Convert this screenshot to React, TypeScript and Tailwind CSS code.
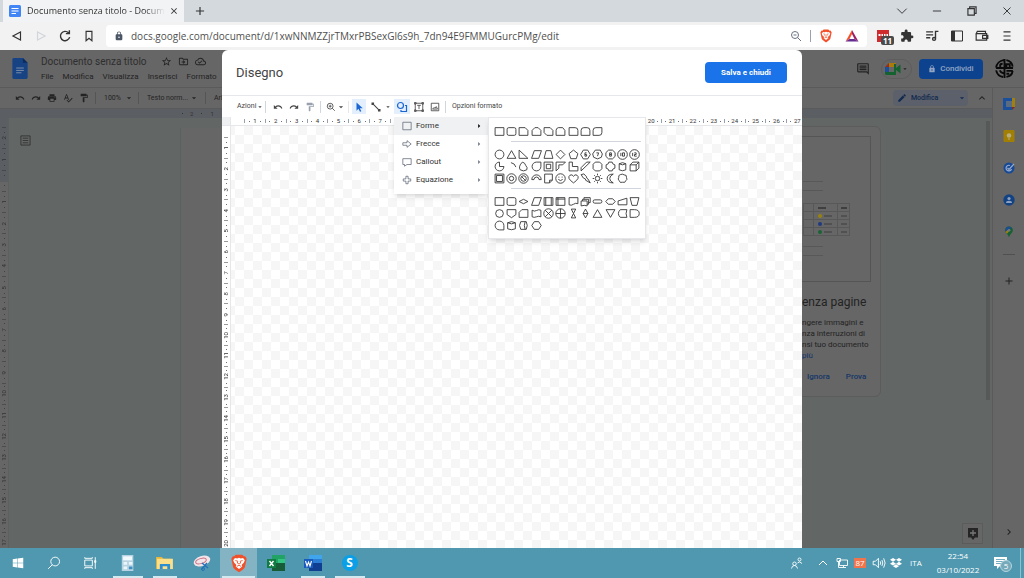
import type { ReactNode } from "react"
import {
  MdAdd,
  MdArrowDropDown,
  MdArrowRight,
  MdChevronRight,
  MdClose,
  MdEdit,
  MdExpandLess,
  MdExtension,
  MdFormatPaint,
  MdLock,
  MdOutlineCloudDone,
  MdOutlineComment,
  MdOutlineDriveFileMove,
  MdPrint,
  MdRedo,
  MdSpellcheck,
  MdStarBorder,
  MdUndo,
} from "react-icons/md"
import { FaDropbox, FaWindows } from "react-icons/fa"

// Outlines of the shape palette, each drawn in a 10x10 box
const SQUARE = "M1 1.5H9V8.5H1Z"
const CIRCLE = "M5 1A4 4 0 1 1 5 9A4 4 0 1 1 5 1Z"

const rectShapes = [
  SQUARE,
  "M2.5 1.5H7.5Q9 1.5 9 3V7Q9 8.5 7.5 8.5H2.5Q1 8.5 1 7V3Q1 1.5 2.5 1.5Z",
  "M1 1.5H6.5L9 4V8.5H1Z",
  "M3.5 1.5H6.5L9 4V8.5H1V4Z",
  "M1 1.5H6.5L9 4V8.5H3.5L1 6Z",
  "M3 1.5H7L9 4V8.5H1V4Q1 2 3 1.5Z",
  "M1 1.5H6.5Q9 1.5 9 4V8.5H1Z",
  "M3.5 1.5H6.5Q9 1.5 9 4V8.5H1V4Q1 1.5 3.5 1.5Z",
  "M3.5 1.5H9V6Q9 8.5 6.5 8.5H1V4Q1 1.5 3.5 1.5Z",
]

const basicShapes = [
  CIRCLE,
  "M5 1.5L9 8.5H1Z",
  "M1 1V8.5H9Z",
  "M3 1.5H9.5L7 8.5H.5Z",
  "M2.8 1.5H7.2L9 8.5H1Z",
  "M5 1L9 5L5 9L1 5Z",
  "M5 1L9 4.2L7.5 8.8H2.5L1 4.2Z",
  "M3 1H7L9.4 5L7 9H3L.6 5ZM6 3.5H4.5V6.5H6V5H4.5",
  "M3 1H7.5L9.4 4.5L8.5 7.5L5 9L1.5 7.5L.6 4.5ZM4 3.5H6L5 6.5",
  "M3.2 1H6.8L9.2 3.3V6.7L6.8 9H3.2L.8 6.7V3.3ZM4.2 3.5H5.8V6.5H4.2ZM4.2 5H5.8",
  "M5 .6A4.4 4.4 0 1 1 5 9.4A4.4 4.4 0 1 1 5 .6ZM3.5 3.5V6.5M5 3.5H6.8V6.5H5Z",
  "M5 .6A4.4 4.4 0 1 1 5 9.4A4.4 4.4 0 1 1 5 .6ZM3.3 3.5V6.5M4.8 3.5H6.5V5H5V6.5H7",
  "M5 1V5H9A4 4 0 1 1 5 1Z",
  "M4.5 1.5Q8 2 9 5.5",
  "M4 1A4 4 0 0 1 7 4Q9 6 8 8Q5 10 2 8Q0 5 4 1Z",
  "M5 1H9V5A4 4 0 1 1 5 1Z",
  "M1 1H9V9H1ZM3 3H7V7H3Z",
  "M1 1H9.5L7 3.5H3.5V6.5L1 9Z",
  "M1 1H4V5H9V9H1Z",
  "M1 9V6L6 1H9.3Z",
  "M3 1H7L9 3V7L7 9H3L1 7V3Z",
  "M3.5 1H6.5Q6.500 3 9 3.500V6.500Q6.500 7 6.500 9H3.500Q3.500 7 1 6.500V3.500Q3.500 3 3.500 1Z",
  "M2 2.5Q5 .5 8 2.5V8Q5 9.7 2 8ZM2 2.5Q5 4.5 8 2.5",
  "M1 3.5L3.5 1H9V6.5L6.5 9H1ZM1 3.5H6.5V9M6.5 3.5L9 1",
  "M1 1H9V9H1ZM2.3 2.3H7.7V7.7H2.3Z",
  "M5 .7A4.3 4.3 0 1 1 5 9.3A4.3 4.3 0 1 1 5 .7ZM5 3A2 2 0 1 1 5 7A2 2 0 1 1 5 3Z",
  "M5 .7A4.3 4.3 0 1 1 5 9.3A4.3 4.3 0 1 1 5 .7ZM5 2.5A2.5 2.5 0 1 1 5 7.5A2.5 2.5 0 1 1 5 2.5ZM3.200 3.200L6.800 6.800",
  "M.7 6A4.3 4.3 0 0 1 9.3 6H7.3A2.3 2.3 0 0 0 2.7 6Z",
  "M1.5 1H8.5V6.5L6 9H1.5ZM6 9V6.5H8.5",
  "M5 .7A4.3 4.3 0 1 1 5 9.3A4.3 4.3 0 1 1 5 .7ZM3 5.8Q5 8 7 5.8M3.5 3.3V4.2M6.5 3.3V4.2",
  "M5 9Q-1.5 4.5 1.8 2Q3.8 .8 5 3Q6.2 .8 8.2 2Q11.5 4.5 5 9Z",
  "M1 1.500L3.500 .8L6 3.500L6 4.500L7.300 5.500L9.3 9L5 6.5L5 5.500L3 4.500Z",
  "M5 3A2 2 0 1 1 5 7A2 2 0 1 1 5 3ZM5 .6V2M5 8V9.4M.6 5H2M8 5H9.4M2 2L3 3M7 7L8 8M8 2L7 3M2 8L3 7",
  "M7.500 1Q2 1 2 5Q2 9 7.500 9Q4.3 7.500 4.300 5Q4.300 2.500 7.500 1Z",
  "M3 1.5Q5 .5 6.5 1.7Q9 1.5 8.6 4Q9.8 6 8 7Q7.5 9.2 5.2 8.4Q2.5 9.4 2 7Q.3 5.5 1.6 4Q1 2 3 1.5Z",
]

const flowShapes = [
  SQUARE,
  "M2.5 1.5H7.5Q9 1.5 9 3V7Q9 8.5 7.5 8.5H2.5Q1 8.5 1 7V3Q1 1.5 2.5 1.5Z",
  "M5 3L9 5L5 7L1 5Z",
  "M3 1.5H9.5L7 8.5H.5Z",
  "M1 1.5H9V8.5H1ZM2.5 1.5V8.5M7.5 1.5V8.5",
  "M1 1.5H9V8.5H1ZM2.7 1.5V8.5M1 2.8H9",
  "M1 1.5H9V7Q7 6 5 7.5Q3 9 1 8Z",
  "M1 4.5H6.5V9Q4 8 1 9ZM2.3 4.5V3H7.8V7.5H6.5M3.6 3V1.5H9.3V6H7.8",
  "M2.5 3.5H7.5A1.5 1.5 0 0 1 7.5 6.5H2.5A1.5 1.5 0 0 1 2.5 3.5Z",
  "M3 2.5H7L9.3 5L7 7.5H3L.7 5Z",
  "M1 4.5L9 2V8H1Z",
  "M1 1.5H9L7.3 8.5H2.7Z",
  "M5 1.5A3.5 3.5 0 1 1 5 8.5A3.5 3.5 0 1 1 5 1.5Z",
  "M1 1.5H9V6L5 8.8L1 6Z",
  "M3.5 1.5H9V8.5H1V4Z",
  "M1 2Q3 3.5 5 2.3Q7 1 9 2V8Q7 7 5 8Q3 9 1 8Z",
  "M5 .7A4.3 4.3 0 1 1 5 9.3A4.3 4.3 0 1 1 5 .7ZM2 2L8 8M8 2L2 8",
  "M5 .7A4.3 4.3 0 1 1 5 9.3A4.3 4.3 0 1 1 5 .7ZM5 .7V9.3M.7 5H9.3",
  "M3 1H7L5 5L7 9H3L5 5Z",
  "M5 1L7.2 5L5 9L2.8 5ZM2.8 5H7.2",
  "M5 1.5L9 8.5H1Z",
  "M1 1.5H9L5 8.5Z",
  "M3 1.5H9Q7.5 5 9 8.5H3Q-.5 5 3 1.5Z",
  "M1 1.5H5Q9.3 1.5 9.3 5Q9.3 8.5 5 8.5H1Z",
  "M9 9H5A4 4 0 1 1 9 5Z",
  "M1.5 2.5Q5 .5 8.5 2.5V8Q5 9.7 1.5 8ZM1.5 2.5Q5 4.5 8.5 2.5",
  "M2.5 1.5H7.5Q9.3 5 7.5 8.5H2.5Q.3 5 2.5 1.5ZM6.5 1.5Q5 5 6.5 8.5",
  "M3 1.5H7L9.3 5L7 8.5H3L.7 5Z",
]

const menuItems = [
  { label: "Forme", d: "M1 1.5H11V10.5H1Z" },
  { label: "Frecce", d: "M1 4.5H6V2L11 6L6 10V7.5H1Z" },
  { label: "Callout", d: "M1 2H11V9H6L3 11V9H1Z" },
  { label: "Equazione", d: "M4.7 1.5H7.3V4.7H10.5V7.3H7.3V10.5H4.7V7.3H1.5V4.7H4.7Z" },
]

const docMenus = ["File", "Modifica", "Visualizza", "Inserisci", "Formato"]
const topNumbers = Array.from({ length: 27 }, (_, i) => String(i + 1))
const sideNumbers = Array.from({ length: 20 }, (_, i) => String(i + 1))
const pageNumbers = ["2", "1", "", ...Array.from({ length: 17 }, (_, i) => String(i + 1))]

function Line({ d, className = "size-3", box = 24, width = 2 }: { d: string; className?: string; box?: number; width?: number }) {
  return (
    <svg viewBox={`0 0 ${box} ${box}`} className={className} fill="none" stroke="currentColor" strokeWidth={width}>
      <path d={d} />
    </svg>
  )
}

function HorizontalRuler({ marks }: { marks: string[] }) {
  return (
    <>
      {marks.map((n) => (
        <div key={n} className="flex min-w-0 flex-1 basis-0 items-center justify-between">
          <i className="h-1 w-px bg-gray-400" />
          <i className="size-px bg-gray-500" />
          <span className="leading-none">{n}</span>
          <i className="size-px bg-gray-500" />
          <i />
        </div>
      ))}
    </>
  )
}

function VerticalRuler({ marks }: { marks: string[] }) {
  return (
    <>
      {marks.map((n, i) => (
        <div key={i} className="flex min-h-0 flex-1 basis-0 flex-col items-center justify-between">
          <i className="h-px w-1 bg-current opacity-50" />
          <i className="size-px bg-current opacity-70" />
          <span className="rotate-180 leading-none [writing-mode:vertical-rl]">{n}</span>
          <i className="size-px bg-current opacity-70" />
          <i />
        </div>
      ))}
    </>
  )
}

function BraveLogo({ className }: { className: string }) {
  return (
    <svg viewBox="0 0 24 26" className={className}>
      <path d="M7.500 1H16.500L18.500 3.200L20.500 3L22.500 6.500L22 9L20 18Q19 20.500 12 25Q5 20.500 4 18L2 9L1.500 6.500L3.500 3L5.500 3.200Z" fill="#f2502a" />
      <path d="M6.500 5.500L9.500 6L12 5L14.500 6L17.500 5.500L20 8.500L18.500 12L15.500 15L16.500 17L12 20.500L7.500 17L8.500 15L5.500 12L4 8.500Z" fill="#fff" />
      <path d="M7 9L10.300 9.800L9.800 12.500L12 13.700L14.200 12.500L13.700 9.800L17 9M9 17L12 15.300L15 17" fill="none" stroke="#f2502a" strokeWidth="1.2" />
    </svg>
  )
}

function BrowserBar() {
  return (
    <header className="shrink-0 bg-[#d4d9dd] text-[#333]">
      <div className="flex h-[22px] items-stretch">
        <div className="ml-[3px] flex w-[181px] items-center bg-[#f2f3f4] pl-1.5">
          <svg viewBox="0 0 12 12" className="size-3 shrink-0">
            <rect width="12" height="12" rx="1.5" fill="#4285f4" />
            <path d="M2.5 3.5H9.5M2.5 6H9.5M2.5 8.5H7" stroke="#fff" strokeWidth="1.2" />
          </svg>
          <span className="ml-1.5 font-['Open_Sans',sans-serif] text-[9px] whitespace-nowrap [mask-image:linear-gradient(to_right,#000_85%,transparent)]">
            Documento senza titolo - Docum
          </span>
          <button aria-label="Chiudi scheda" className="mr-[5px] ml-auto"><MdClose className="size-2.5" /></button>
        </div>
        <button aria-label="Nuova scheda" className="ml-[9px]"><MdAdd className="size-3.5" /></button>
        <div className="ml-auto flex items-center gap-[21px] pr-2.5">
          <button aria-label="Cerca schede"><Line d="M4 8L12 16L20 8" className="size-3.5" width={1.6} /></button>
          <button aria-label="Riduci"><Line d="M5 12H19" className="size-3.5" width={1.6} /></button>
          <button aria-label="Ripristina"><Line d="M5 8H16V19H5ZM8 8V5H19V16H16" className="size-3.5" /></button>
          <button aria-label="Chiudi"><Line d="M6 6L18 18M18 6L6 18" className="size-3.5" width={1.6} /></button>
        </div>
      </div>
      <div className="flex h-7 items-center bg-[#f2f2f2] pr-[10px] pl-[10px]">
        <div className="flex items-center gap-[10px]">
          <button aria-label="Indietro"><Line d="M18 5V19L5 12Z" className="size-3.5" /></button>
          <button aria-label="Avanti" className="text-gray-300"><Line d="M6 5V19L19 12Z" className="size-3.5" /></button>
          <button aria-label="Ricarica"><Line d="M18 6.500A8 8 0 1 0 20 14M19.500 2V8H13.500" className="size-3.5" width={2.4} /></button>
          <button aria-label="Segnalibro"><Line d="M7 4H17V20L12 16L7 20Z" className="size-3.5" /></button>
        </div>
        <div className="ml-2.5 flex h-[22px] flex-1 items-center rounded-sm bg-white pr-2 pl-2">
          <MdLock className="size-2.5 text-gray-600" />
          <input
            aria-label="Indirizzo"
            className="ml-[7px] min-w-0 flex-1 bg-transparent font-['Open_Sans',sans-serif] text-[10px] text-[#505050] outline-none"
            defaultValue="docs.google.com/document/d/1xwNNMZZjrTMxrPBSexGl6s9h_7dn94E9FMMUGurcPMg/edit"
          />
          <Line d="M10 3A7 7 0 1 1 10 17A7 7 0 1 1 10 3ZM15 15L22 22M7 10H13" className="size-3 text-gray-500" />
          <i className="mx-2 h-3 w-px bg-gray-400" />
          <BraveLogo className="size-3.5" />
          <svg viewBox="0 0 14 14" className="ml-3 size-3.5">
            <path d="M7 1L.5 12.5L4.5 10L7 5Z" fill="#f2552c" />
            <path d="M7 1L13.5 12.5L9.5 10L7 5Z" fill="#9e1f63" />
            <path d="M.5 12.5H13.5L9.5 10H4.5Z" fill="#662d91" />
          </svg>
        </div>
        <div className="ml-2.5 flex items-center gap-[11px]">
          <button aria-label="Estensione" className="relative h-3 w-3 bg-[#cf2b2f]">
            <svg viewBox="0 0 12 12" className="absolute inset-0"><path d="M1.500 4H3.500V6H1.500ZM4.500 4H6V6H4.500ZM7 4H8.500V6H7ZM9.500 4H11V6H9.500Z" fill="#fff" /></svg>
            <span className="absolute top-1.5 left-1 rounded-[2px] bg-[#4a4a4a] px-0.5 font-['Open_Sans',sans-serif] text-[8px] leading-[9px] font-bold text-white">11</span>
          </button>
          <button aria-label="Estensioni"><MdExtension className="size-3.5" /></button>
          <button aria-label="Media"><Line d="M2 5H14M2 10H14M2 15H9M18 18V4H23M18 17A2.5 2.5 0 1 1 13 17A2.5 2.5 0 1 1 18 17" className="size-3.5" width={2.4} /></button>
          <button aria-label="Barra laterale">
            <svg viewBox="0 0 14 14" className="size-3.5"><path d="M1.5 2H12.5V12H1.5Z" fill="none" stroke="currentColor" /><path d="M1.5 2H5V12H1.5Z" fill="currentColor" /></svg>
          </button>
          <button aria-label="Portafoglio"><Line d="M2 8V19H20V8H2L4 4H18V8M13 11H22V16H13Z" className="size-3.5" /></button>
          <button aria-label="Menu"><Line d="M6 5H18M6 12H18M6 19H18" className="size-3.5" /></button>
        </div>
      </div>
    </header>
  )
}

function DocsHeader() {
  return (
    <div className="flex h-[37px] shrink-0 items-center pr-[10px] pl-3">
      <svg viewBox="0 0 16 22" className="h-[21px] w-4">
        <path d="M1.5 0H11L16 5V20.5Q16 22 14.5 22H1.5Q0 22 0 20.5V1.5Q0 0 1.5 0Z" fill="#174384" />
        <path d="M11 0L16 5H11Z" fill="#0c2d5c" />
        <path d="M4 10.5H12M4 13H12M4 15.500H9.500" stroke="#8190a8" />
      </svg>
      <div className="ml-[13px]">
        <div className="flex items-center">
          <h1 className="text-[10px] leading-4 whitespace-nowrap text-[#2e2e2e]">Documento senza titolo</h1>
          <div className="ml-3.5 flex gap-1.5">
            <MdStarBorder className="size-[11px]" />
            <MdOutlineDriveFileMove className="size-[11px]" />
            <MdOutlineCloudDone className="size-[11px]" />
          </div>
        </div>
        <nav className="flex gap-[9px] text-[8px] leading-[14px]">
          {docMenus.map((m) => (
            <button key={m}>{m}</button>
          ))}
        </nav>
      </div>
      <div className="ml-auto flex items-center">
        <MdOutlineComment className="size-3.5" />
        <button aria-label="Meet" className="ml-[11px] flex h-5 w-[31px] items-center justify-center rounded-full border border-[#5d5d5d]">
          <svg viewBox="0 0 16 12" className="h-3 w-4">
            <path d="M0 4L4 0V4Z" fill="#992c22" />
            <path d="M4 0H11V4H4Z" fill="#a87b0c" />
            <path d="M0 4H4V9H0Z" fill="#1b4f9a" />
            <path d="M0 9H11V12H1.500Q0 12 0 10.500Z" fill="#14622f" />
            <path d="M11 1V11H9V1ZM11 5L15.500 1.500V10.500L11 7Z" fill="#14622f" />
          </svg>
          <MdArrowDropDown className="size-2" />
        </button>
        <button className="ml-[7px] flex h-5 w-16 items-center justify-center gap-1 rounded-sm bg-[#0d438e] text-[8px] font-medium text-[#93a5c3]">
          <MdLock className="size-2" />
          Condividi
        </button>
        <svg viewBox="0 0 20 20" className="ml-3 size-[19px]" fill="none" stroke="#0a0a0a" strokeWidth="2">
          <path d="M10 0V20M1 9.500H19M9 1.200A9 9 0 0 0 1.200 9M5.500 9V6.500Q5.500 5 8 5M12 1.200Q18 2.500 18.500 8M12 9V5.500H15.500V9M1.200 12Q2.500 18 8.500 19M5 12Q6 14.500 9 15M12 12.500H18.800M18.500 12.500Q18 18 12 18.800M12 15.500H15" />
        </svg>
      </div>
    </div>
  )
}

function DocsToolbar() {
  return (
    <div className="flex h-[22px] shrink-0 items-center border-t border-b border-[#5a5a5a] pr-1 pl-[15px] text-[7px]">
      <div className="flex gap-1.5">
        <button aria-label="Annulla"><MdUndo className="size-2.5" /></button>
        <button aria-label="Ripeti"><MdRedo className="size-2.5" /></button>
        <button aria-label="Stampa"><MdPrint className="size-2.5" /></button>
        <button aria-label="Ortografia"><MdSpellcheck className="size-2.5" /></button>
        <button aria-label="Copia formato"><MdFormatPaint className="size-2.5" /></button>
      </div>
      <i className="ml-1.5 h-3 w-px bg-[#555]" />
      <select aria-label="Zoom" className="ml-2 w-[18px] appearance-none"><option>100%</option></select>
      <MdArrowDropDown className="ml-0.5 size-2.5" />
      <i className="ml-1 h-3 w-px bg-[#555]" />
      <select aria-label="Stile" className="ml-2 w-[42px] appearance-none"><option>Testo norm...</option></select>
      <MdArrowDropDown className="size-2.5" />
      <i className="ml-1.5 h-3 w-px bg-[#555]" />
      <span className="ml-2">Arial</span>
      <label className="ml-auto flex h-4 w-[75px] items-center rounded-sm bg-[#5b606a] pl-1 text-[#12294f]">
        <MdEdit className="size-2.5" />
        <select aria-label="Modalità" className="ml-1 w-[46px] appearance-none font-medium"><option>Modifica</option></select>
        <MdArrowDropDown className="size-2.5" />
      </label>
      <button aria-label="Nascondi menu" className="ml-2"><MdExpandLess className="size-3" /></button>
    </div>
  )
}

const tableRows = [
  { dot: "", bar: "bg-[#3f3f3f]" },
  { dot: "bg-[#98830f]", bar: "bg-[#515151]" },
  { dot: "bg-[#203a82]", bar: "bg-[#515151]" },
  { dot: "bg-[#1c6234]", bar: "bg-[#515151]" },
]

function PagelessCard() {
  return (
    <section className="mt-[8px] ml-auto h-[271px] w-[90px] rounded-md border border-[#5b5b5b] bg-[#666]">
      <div className="mt-[9px] mr-[9px] h-[146px] border border-l-0 border-[#555] pl-[11px]">
        <div className="mt-[44px] h-2.5 w-5 border-y border-[#585858]" />
        <table className="mt-3 w-[47px]">
          <tbody>
            {tableRows.map(({ dot, bar }) => (
              <tr key={dot} className="h-2">
                <td className="border border-[#585858]" />
                <td className="w-6 border border-[#585858]">
                  <div className="flex h-1 items-center gap-0.5 pl-1">
                    {dot && <i className={`size-1 rounded-full ${dot}`} />}
                    <i className={`h-0.5 w-2 ${bar}`} />
                  </div>
                </td>
                <td className="w-3 border border-[#585858]"><i className={`mx-auto block h-0.5 w-1.5 ${bar}`} /></td>
              </tr>
            ))}
          </tbody>
        </table>
        <div className="mt-2.5 h-2.5 w-5 border-y border-[#585858]" />
      </div>
      <div className="pl-2.5 whitespace-nowrap">
        <h2 className="mt-3 text-[12px] leading-4">enza pagine</h2>
        <p className="mt-[7px] text-[8px] leading-[11px]">
          ngere immagini e
          <br />
          nza interruzioni di
          <br />
          nsi tuo documento
          <br />
          <a href="#piu" className="text-[#153668]">più</a>
        </p>
        <div className="mt-2.5 flex gap-4 pl-[5px] text-[8px] font-medium text-[#153668]">
          <button>Ignora</button>
          <button>Prova</button>
        </div>
      </div>
    </section>
  )
}

function SidePanel() {
  return (
    <aside className="flex w-8 shrink-0 flex-col items-center border-t border-l border-[#5a5a5a] pt-2.5">
      <svg viewBox="0 0 12 12" className="size-3">
        <path d="M0 0H9V3H3V9H0Z" fill="#1b4f9c" /><path d="M9 0H12V9H9Z" fill="#a0800e" /><path d="M0 9H9V12H0Z" fill="#1b4f9c" /><path d="M9 9H12L9 12Z" fill="#7b2a24" /><path d="M3 3H9V9H3Z" fill="#5c6c80" />
      </svg>
      <svg viewBox="0 0 12 12" className="mt-5 size-3">
        <rect x=".5" width="11" height="12" rx="1" fill="#a07f04" /><circle cx="6" cy="5.500" r="2.300" fill="#b9ad80" /><path d="M5 9H7" stroke="#b9ad80" />
      </svg>
      <svg viewBox="0 0 12 12" className="mt-5 size-3">
        <circle cx="6" cy="6" r="5.500" fill="#174a95" /><path d="M8.500 7A2.800 2.800 0 1 1 7 3.500M4.500 6L6 7.500L11 2" fill="none" stroke="#9aabca" strokeWidth="1.200" />
      </svg>
      <svg viewBox="0 0 12 12" className="mt-5 size-3">
        <circle cx="6" cy="6" r="5.700" fill="#134283" /><circle cx="6" cy="4.500" r="1.600" fill="#8da0bd" /><path d="M3 9Q3 6.700 6 6.700Q9 6.700 9 9Z" fill="#8da0bd" />
      </svg>
      <svg viewBox="0 0 12 12" className="mt-5 size-3">
        <path d="M6 .5A3.800 3.800 0 0 1 9.800 4.300C9.800 7 6.800 8 6 11.500C5.200 8 2.200 7 2.200 4.300A3.800 3.800 0 0 1 6 .5Z" fill="#146132" /><path d="M2.200 4.500A3.800 3.800 0 0 1 6 .5L8.500 1.500L4 7Z" fill="#1c4d90" /><path d="M2.500 6L4 7.800L6 5.500L4.500 4Z" fill="#9f7f0c" /><circle cx="6" cy="4.300" r="1.400" fill="#777" />
      </svg>
      <i className="mt-4 h-px w-3 bg-[#505050]" />
      <button aria-label="Componenti aggiuntivi" className="mt-5"><MdAdd className="size-3" /></button>
      <button aria-label="Nascondi pannello" className="mt-auto mb-2.5"><MdChevronRight className="size-3" /></button>
    </aside>
  )
}

function DocsPage() {
  return (
    <div className="flex h-full flex-col bg-[#666] text-[#232323]">
      <DocsHeader />
      <div className="flex min-h-0 flex-1">
        <div className="flex min-w-0 flex-1 flex-col">
          <DocsToolbar />
          <div className="flex h-[9px] shrink-0 items-center bg-[#5b5e63] pl-[182px] text-[6px] text-[#333]">
            <i className="size-px bg-current" />
            <span className="ml-[7px]">2</span>
            <i className="ml-2 size-px bg-current" />
            <span className="ml-2">1</span>
          </div>
          <div className="flex min-h-0 flex-1 bg-[#626664]">
            <div className="flex w-2 flex-col overflow-hidden bg-[linear-gradient(#5b5e63_64px,#666_64px)] text-[6px] text-[#333]">
              <div className="mt-[9px] -mb-[5px] flex min-h-0 flex-1 flex-col">
                <VerticalRuler marks={pageNumbers} />
              </div>
            </div>
            <div className="w-[172px] border-l border-[#5c605f] pt-[17px] pl-[11px] text-[#333]">
              <Line d="M1 1H11V11H1ZM3 3.500H9M3 6H9M3 8.500H9" box={12} width={1} className="size-[11px]" />
            </div>
            <div className="mt-[10px] flex-1 border-l border-[#596363] bg-[#666]" />
            <div className="flex w-[212px] flex-col">
              <PagelessCard />
              <button aria-label="Esplora" className="mt-auto mr-[-102px] mb-1 ml-auto flex size-[21px] items-center justify-center border border-[#5b5b5b] bg-[#666]">
                <svg viewBox="0 0 12 12" className="size-3"><path d="M1 0H11V9.500H8L6 12L4 9.500H1Z" fill="#252525" /><path d="M6 2V8M3 5H9" stroke="#777" strokeWidth="1.300" /></svg>
              </button>
            </div>
            <div className="flex w-[111px] justify-end pt-[3px] pr-0.5">
              <div className="h-[279px] w-1 bg-[#565958]" />
            </div>
          </div>
        </div>
        <SidePanel />
      </div>
    </div>
  )
}

function ShapeGrid({ shapes }: { shapes: string[] }) {
  return (
    <div className="grid grid-cols-12 px-1">
      {shapes.map((d, i) => (
        <button key={i} aria-label="Forma" className="flex h-[12px] items-center justify-center">
          <Line d={d} box={10} width={0.8} className="size-[11px]" />
        </button>
      ))}
    </div>
  )
}

function ShapeMenu() {
  return (
    <div className="absolute top-full left-0 z-10 w-[94px] bg-white text-[#333] shadow-md">
      {menuItems.map((item, i) => (
        <button key={item.label} className={`flex h-[18px] w-full items-center pl-2 text-[8px] ${i === 0 ? "bg-[#eff1f3]" : ""}`}>
          <Line d={item.d} box={12} width={0.8} className="size-2.5 text-gray-600" />
          <span className="ml-1">{item.label}</span>
          <MdArrowRight className={`mr-1 ml-auto size-2.5 ${i === 0 ? "text-black" : "text-gray-500"}`} />
        </button>
      ))}
      <div className="h-[5px]" />
      <div className="absolute top-0 left-full w-[158px] border border-gray-200 bg-white py-[7px] text-[#333] shadow-md">
        <ShapeGrid shapes={rectShapes} />
        <hr className="mt-1 mr-1 mb-1.5 ml-[22px] border-gray-300" />
        <ShapeGrid shapes={basicShapes} />
        <hr className="mt-1 mr-1 mb-1.5 ml-[22px] border-gray-300" />
        <ShapeGrid shapes={flowShapes} />
      </div>
    </div>
  )
}

function ToolButton({ label, className = "w-4", children }: { label: string; className?: string; children: ReactNode }) {
  return (
    <button aria-label={label} className={`flex h-[15px] items-center justify-center ${className}`}>
      {children}
    </button>
  )
}

function DrawingDialog() {
  return (
    <div role="dialog" aria-label="Disegno" className="flex h-full w-[580px] flex-col rounded-t-md bg-white text-[#444]">
      <div className="flex h-[45px] shrink-0 items-center justify-between pr-[15px] pl-3.5">
        <h2 className="text-[13px]">Disegno</h2>
        <button className="h-[21px] w-[82px] rounded-sm bg-[#1a73e8] text-[8px] font-bold text-white">Salva e chiudi</button>
      </div>
      <div className="flex h-[22px] shrink-0 items-center border-t border-gray-200 pl-[15px] text-[7px]">
        <button className="flex w-6 items-center">Azioni<MdArrowDropDown className="size-2 shrink-0" /></button>
        <i className="mx-1 h-3 w-px bg-gray-300" />
        <ToolButton label="Annulla"><MdUndo className="size-2.5" /></ToolButton>
        <ToolButton label="Ripeti"><MdRedo className="size-2.5" /></ToolButton>
        <ToolButton label="Copia formato" className="w-4 text-gray-400"><MdFormatPaint className="size-2.5" /></ToolButton>
        <i className="mx-0.5 h-3 w-px bg-gray-300" />
        <ToolButton label="Zoom" className="ml-px w-6">
          <Line d="M10 3A7 7 0 1 1 10 17A7 7 0 1 1 10 3ZM15 15L21 21M6.500 10H13.500M10 6.500V13.500" className="size-2.5" />
          <MdArrowDropDown className="size-2.5" />
        </ToolButton>
        <i className="mr-[3px] h-3 w-px bg-gray-200" />
        <ToolButton label="Seleziona" className="w-3.5 bg-[#e4effd]">
          <svg viewBox="0 0 12 12" className="size-2.5"><path d="M3 .5L10.500 7.500H7L8.800 11L7.200 11.800L5.400 8.200L3 10.500Z" fill="#1a66d2" /></svg>
        </ToolButton>
        <ToolButton label="Linea" className="ml-0.5 w-4"><Line d="M4 4L20 20M2.500 2.500H6V6H2.500ZM18 18H21.500V21.500H18Z" className="size-2.5" width={2.6} /></ToolButton>
        <ToolButton label="Tipo di linea" className="mr-0.5 w-2"><MdArrowDropDown className="size-2.5" /></ToolButton>
        <div className="relative flex h-full items-center">
          <ToolButton label="Forma" className="w-4 bg-[#e4effd] text-[#1a66d2]"><Line d="M9 3A6 6 0 1 1 9 15A6 6 0 1 1 9 3ZM18 9H21V21H10V18" className="size-3" width={2.4} /></ToolButton>
          <ShapeMenu />
        </div>
        <ToolButton label="Casella di testo" className="ml-px w-4"><Line d="M3 3H21V21H3ZM7.500 8H16.500M12 8V17M1 1H5V5H1ZM19 1H23V5H19ZM1 19H5V23H1ZM19 19H23V23H19Z" className="size-2.5" /></ToolButton>
        <ToolButton label="Immagine"><Line d="M3 3H21V21H3ZM6 17L10 13L12 15L15 11L18 17Z" className="size-2.5" /></ToolButton>
        <i className="mr-1.5 ml-0.5 h-3 w-px bg-gray-300" />
        <button>Opzioni formato</button>
      </div>
      <div className="flex h-[9px] shrink-0 overflow-hidden border-b border-gray-200 text-[6px] text-[#333]">
        <i className="w-[9px] border-r border-gray-200 bg-[#eef0f2]" />
        <div className="-mr-[5px] ml-[13px] flex min-w-0 flex-1">
          <HorizontalRuler marks={topNumbers} />
        </div>
      </div>
      <div className="flex min-h-0 flex-1 overflow-hidden">
        <div className="flex w-[9px] flex-col border-r border-gray-200 text-[6px] text-[#333]">
          <div className="mt-[11px] -mb-[5px] flex min-h-0 flex-1 flex-col">
            <VerticalRuler marks={sideNumbers} />
          </div>
        </div>
        <div className="flex-1 bg-[conic-gradient(#f6f6f6_25%,#fff_0_50%,#f6f6f6_0_75%,#fff_0)] bg-[length:18px_18px] bg-[position:4px_0px]" />
      </div>
    </div>
  )
}

function TaskButton({ label, className = "", bar = "", children }: { label: string; className?: string; bar?: string; children: ReactNode }) {
  return (
    <button aria-label={label} className={`relative flex h-full w-[37px] items-center justify-center ${className}`}>
      {children}
      {bar && <i className={`absolute bottom-0 h-0.5 bg-[#d3e9f0] ${bar}`} />}
    </button>
  )
}

function Taskbar() {
  return (
    <footer className="flex h-[30px] shrink-0 items-stretch bg-[#4f98af] font-['Open_Sans',sans-serif] text-white">
      <button aria-label="Start" className="flex w-9 items-center justify-center"><FaWindows className="size-3" /></button>
      <button aria-label="Cerca" className="flex w-9 items-center justify-center"><Line d="M14 2A7.500 7.500 0 1 1 14 17A7.500 7.500 0 1 1 14 2ZM9 15L2 22" className="size-3.5" width={1.6} /></button>
      <button aria-label="Visualizzazione attività" className="mr-px flex w-9 items-center justify-center">
        <Line d="M3 7H16V17H3ZM3 2V4H16V2M3 22V20H16V22M21 2V22M20 8H22V11H20Z" className="size-3.5" width={1.6} />
      </button>
      <TaskButton label="Calcolatrice" bar="w-[30px]">
        <svg viewBox="0 0 14 18" className="h-4 w-3.5"><path d="M0 0H13V18H0Z" fill="#b8d3e1" /><path d="M1.500 1.500H11.500V6H1.500Z" fill="#f3fafd" /><path d="M2 8H6V11H2ZM8 8H12V11H8ZM2 13H6V16H2Z" fill="#e9f6fb" /><path d="M8 13H12V16H8Z" fill="#3f8fc4" /></svg>
      </TaskButton>
      <TaskButton label="Esplora file" bar="w-6">
        <svg viewBox="0 0 18 15" className="h-3.5 w-[17px]"><path d="M0 1H6L8 3H17V14H0Z" fill="#e8b93c" /><path d="M1 3H18V14H1Z" fill="#fbe08b" /><path d="M4 14V8.500H15V14H12V11H7V14Z" fill="#2e8fd0" /></svg>
      </TaskButton>
      <TaskButton label="Strumento di cattura">
        <svg viewBox="0 0 18 16" className="h-4 w-[18px]"><ellipse cx="9" cy="6" rx="8.500" ry="5" fill="#f2e4e9" transform="rotate(-18 9 6)" /><ellipse cx="8" cy="6" rx="5.500" ry="2.500" fill="none" stroke="#c9717f" transform="rotate(-18 8 6)" /><path d="M9 8L15 13M14 8L9 14" stroke="#2672b8" strokeWidth="1.500" /><circle cx="10" cy="14" r="1.500" fill="none" stroke="#2672b8" /></svg>
      </TaskButton>
      <TaskButton label="Brave" className="bg-[#84b3c4]" bar="w-[33px]"><BraveLogo className="h-[19px] w-[18px]" /></TaskButton>
      <TaskButton label="Excel">
        <svg viewBox="0 0 18 16" className="h-4 w-[18px]"><path d="M5 0H18V16H5Z" fill="#21a366" /><path d="M5 8H18V16H5Z" fill="#185c37" /><path d="M11 4H18V8H11Z" fill="#33c481" /><path d="M0 4H9V13H0Z" fill="#107c41" /><path d="M2.500 6L6.500 11M6.500 6L2.500 11" stroke="#fff" strokeWidth="1.400" /></svg>
      </TaskButton>
      <TaskButton label="Word" bar="w-6">
        <svg viewBox="0 0 18 16" className="h-4 w-[18px]"><path d="M5 0H18V16H5Z" fill="#2b7cd3" /><path d="M5 0H18V4H5Z" fill="#41a5ee" /><path d="M5 8H18V16H5Z" fill="#103f91" /><path d="M0 4H9V13H0Z" fill="#185abd" /><path d="M1.500 6L3 11L4.500 7L6 11L7.500 6" fill="none" stroke="#fff" strokeWidth="1.100" /></svg>
      </TaskButton>
      <TaskButton label="Skype" bar="w-[30px]">
        <span className="flex size-4 items-center justify-center rounded-full bg-[#0a9fe6] text-[12px] leading-none font-bold">S</span>
      </TaskButton>
      <div className="ml-auto flex items-center text-[8px]">
        <Line d="M7 10A3.500 3.500 0 1 1 7 17A3.500 3.500 0 1 1 7 10ZM1 23Q2 17 7 17Q12 17 13 23M17 2A3 3 0 1 1 17 8A3 3 0 1 1 17 2ZM13 12Q17 7 22 13" className="size-3" width={1.8} />
        <Line d="M4 16L12 8L20 16" className="ml-3.5 size-3" />
        <Line d="M7 6H23V17H7ZM15 17V21M10 21H20M2 3H9V9H2ZM5 9V21H10" className="ml-[7px] size-3" width={1.8} />
        <span className="ml-1.5 flex h-2.5 w-3 items-center justify-center bg-[#f2744c] text-[8px] leading-none">87</span>
        <Line d="M2 9H6L11 4V20L6 15H2ZM14 9Q16 12 14 15M17 7Q20 12 17 17M20 4Q25 12 20 20" className="ml-1.5 size-3.5" width={1.6} />
        <FaDropbox className="ml-1 size-3" />
        <span className="ml-2 w-4">ITA</span>
        <div className="ml-1.5 w-[52px] text-center leading-[14px]">
          <div>22:54</div>
          <div>03/10/2022</div>
        </div>
        <button aria-label="Notifiche" className="relative mr-3 ml-2.5">
          <svg viewBox="0 0 14 14" className="size-3.5"><path d="M0 1H13V10H6L3 13V10H0Z" fill="#fff" /><path d="M2 3.500H11M2 5.500H11M2 7.500H8" stroke="#4f98af" strokeWidth=".8" /></svg>
          <span className="absolute top-1 left-1.5 flex size-3 items-center justify-center rounded-full border border-[#b5d5de] bg-[#76a9ba] text-[8px] leading-none">5</span>
        </button>
        <i className="mr-[3px] h-full w-px bg-[#8fbfcd]" />
      </div>
    </footer>
  )
}

export default function App() {
  return (
    <div className="flex h-screen flex-col overflow-hidden font-[Roboto,sans-serif]">
      <BrowserBar />
      <main className="relative min-h-0 flex-1">
        <DocsPage />
        <div className="absolute inset-0 flex justify-center">
          <DrawingDialog />
        </div>
      </main>
      <Taskbar />
    </div>
  )
}
